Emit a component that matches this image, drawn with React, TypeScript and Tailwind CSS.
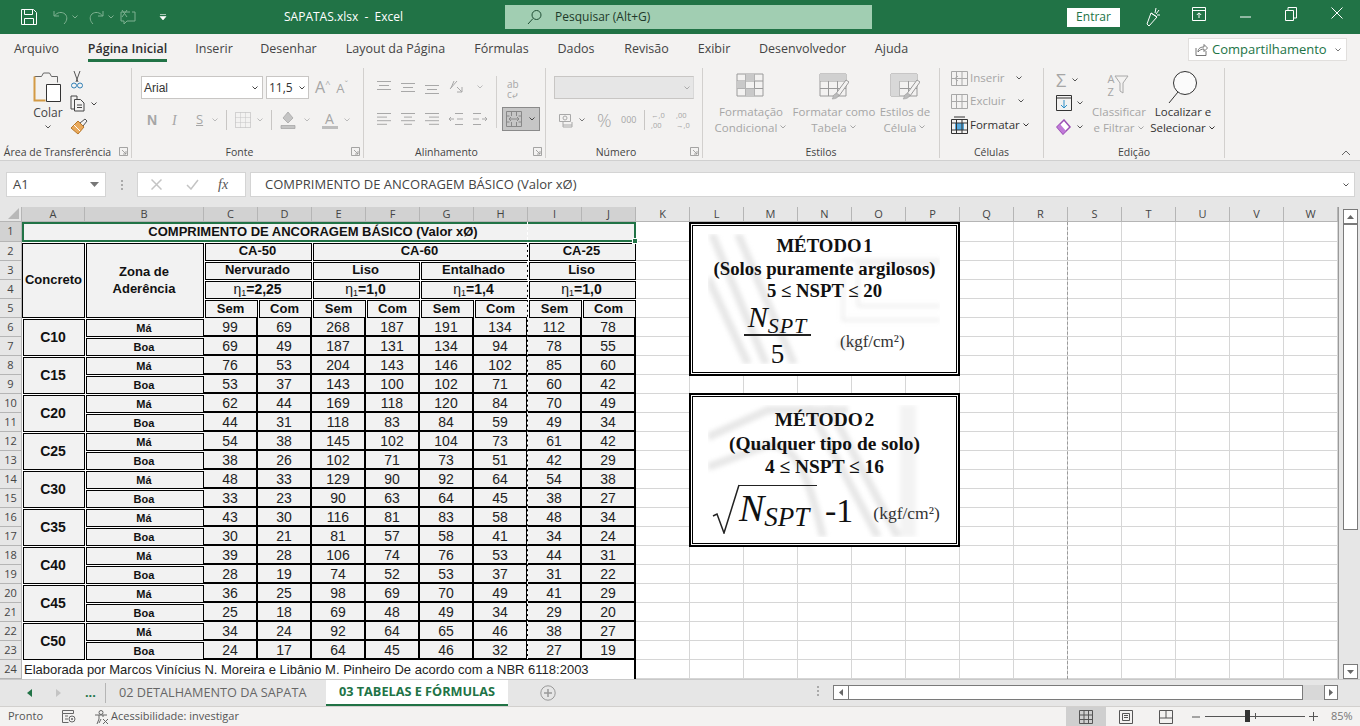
import React from "react";

const G = "#a8a8a8";

function Ic({ w, h, children, className }: { w: number; h: number; children: React.ReactNode; className?: string }) {
  return (
    <svg width={w} height={h} viewBox={`0 0 ${w} ${h}`} fill="none" className={"shrink-0 " + (className ?? "")}>
      {children}
    </svg>
  );
}
function Chev({ c = "#777" }: { c?: string }) {
  return (
    <Ic w={8} h={6}>
      <path d="M1.5 1.5 4 4l2.5-2.5" stroke={c} strokeWidth="1" />
    </Ic>
  );
}
function Launcher() {
  return (
    <Ic w={9} h={9} className="absolute right-[3px] bottom-[2px]">
      <path d="M.5 .5h8v8h-8zM3 3l4 4M7 4v3H4" stroke="#8f8f8f" strokeWidth=".8" />
    </Ic>
  );
}
function AlignIcon({ lines, c = G }: { lines: [number, number][]; c?: string }) {
  return (
    <Ic w={14} h={15}>
      {lines.map(([x, y], i) => (
        <path key={i} d={`M${x - 1} ${y + 0.5}H${15 - x}`} stroke={c} />
      ))}
    </Ic>
  );
}
function TextLines({ kind }: { kind: "l" | "c" | "r" }) {
  const rows = [0, 1, 2, 3];
  return (
    <Ic w={14} h={12}>
      {rows.map((i) => {
        const short = i % 2 === 1;
        const x1 = kind === "l" ? 0 : kind === "c" ? (short ? 3 : 0) : short ? 4 : 0;
        const x2 = kind === "l" ? (short ? 10 : 14) : kind === "c" ? (short ? 11 : 14) : 14;
        return <path key={i} d={`M${x1} ${i * 3.6 + 0.5}H${x2}`} stroke={G} />;
      })}
    </Ic>
  );
}

function TitleBar() {
  return (
    <div className="h-[34px] shrink-0 bg-[#217346] flex items-center text-white">
      <div className="w-[505px] flex items-center shrink-0">
        <Ic w={18} h={18} className="ml-[20px]">
          <path d="M1.5 1.5h12l3 3v12h-15zM4.5 1.5v5h8v-5M4.5 16.5v-6h9v6" stroke="#fff" strokeWidth="1" />
        </Ic>
        <Ic w={17} h={16} className="ml-[14px]">
          <path d="M2 2v5h5M2.5 7C5 3 10 2.5 13 5c3 3 2 7-1 10" stroke="#7fb191" strokeWidth="1" />
        </Ic>
        <span className="ml-[2px]"><Chev c="#7fb191" /></span>
        <Ic w={17} h={16} className="ml-[9px]">
          <path d="M15 2v5h-5M14.5 7C12 3 7 2.5 4 5c-3 3-2 7 1 10" stroke="#7fb191" strokeWidth="1" />
        </Ic>
        <span className="ml-[2px]"><Chev c="#7fb191" /></span>
        <Ic w={16} h={16} className="ml-[5px]">
          <path d="M1 3h9M12 3h3v9H7l-3 3v-3H1V3M2 1l5 7M7 1 2 8" stroke="#7fb191" strokeWidth="1" />
        </Ic>
        <Ic w={8} h={8} className="ml-[23px]">
          <path d="M1 1.5h6M1 3.5h6L4 7z" fill="#fff" stroke="#fff" strokeWidth=".6" />
        </Ic>
        <span className="ml-[117px] text-[12px] whitespace-nowrap">SAPATAS.xlsx&nbsp; - &nbsp;Excel</span>
      </div>
      <div className="w-[367px] h-[24px] bg-[#a1ceb2] flex items-center text-[#1e3a2a] shrink-0">
        <Ic w={16} h={16} className="ml-[22px]">
          <circle cx="9.5" cy="6" r="4.5" stroke="#1f4d33" />
          <path d="M6 9.5 1 15" stroke="#1f4d33" />
        </Ic>
        <span className="ml-[12px] text-[12px]">Pesquisar (Alt+G)</span>
      </div>
      <div className="ml-[195px] w-[53px] h-[19px] bg-white text-[#217346] text-[12px] flex items-center justify-center shrink-0">
        Entrar
      </div>
      <div className="ml-[10px] flex">
        <div className="w-[46px] flex justify-center">
          <Ic w={16} h={20}>
            <path d="M6 6 2 17l2 2 8-9zM6 6l6 4M11 1l-1 5M14 3l-3 4M15 8l-3 0" stroke="#fff" strokeWidth="1" />
          </Ic>
        </div>
        <div className="w-[46px] flex justify-center">
          <Ic w={14} h={14}>
            <path d="M.5 .5h13v13H.5zM.5 3.5h13M7 11V6M4.8 8 7 5.8 9.2 8" stroke="#fff" />
          </Ic>
        </div>
        <div className="w-[46px] flex justify-center items-center">
          <Ic w={11} h={2}><path d="M0 1h11" stroke="#fff" /></Ic>
        </div>
        <div className="w-[46px] flex justify-center">
          <Ic w={12} h={14}>
            <path d="M.5 3.5h8v10h-8zM3 3V.5h8.5V11H9" stroke="#fff" />
          </Ic>
        </div>
        <div className="w-[46px] flex justify-center">
          <Ic w={12} h={12}><path d="M.5 .5l11 11M11.5 .5l-11 11" stroke="#fff" /></Ic>
        </div>
      </div>
    </div>
  );
}

const tabs: [string, string][] = [
  ["Arquivo", "w-[45px]"],
  ["Página Inicial", "w-[79px]"],
  ["Inserir", "w-[36px]"],
  ["Desenhar", "w-[55px]"],
  ["Layout da Página", "w-[101px]"],
  ["Fórmulas", "w-[53px]"],
  ["Dados", "w-[38px]"],
  ["Revisão", "w-[45px]"],
  ["Exibir", "w-[32px]"],
  ["Desenvolvedor", "w-[87px]"],
  ["Ajuda", "w-[33px]"],
];

function TabsRow() {
  return (
    <div className="h-[28px] shrink-0 bg-[#f3f2f1] flex items-start pl-[14px] gap-[29px] text-[12.5px] text-[#444]">
      {tabs.map(([t, w]) => (
        <div
          key={t}
          className={
            w +
            " h-[28px] pt-[6px] flex justify-center whitespace-nowrap " +
            (t === "Página Inicial" ? "font-semibold text-[#2e2e2e] border-b-[3px] border-[#217346] h-[26px]" : "")
          }
        >
          {t}
        </div>
      ))}
      <div className="ml-auto mr-[13px] mt-[4px] w-[159px] h-[23px] bg-white border border-[#e1dfdd] flex items-center text-[#217346] text-[13px] font-medium">
        <Ic w={13} h={13} className="ml-[6px] mr-[4px]">
          <path d="M1 5v7.5h10V8M3 9c0-4 3-5 6-5V1.5L12.5 5 9 8.5V6C6.5 6 4.5 7 3 9z" stroke="#666" strokeWidth=".9" />
        </Ic>
        <span className="whitespace-nowrap">Compartilhamento</span>
        <span className="ml-auto mr-[4px]"><Chev /></span>
      </div>
    </div>
  );
}

function Group({ w, label, launcher, shift, children }: { w: string; label: string; launcher?: boolean; shift?: boolean; children: React.ReactNode }) {
  return (
    <div className={w + " relative shrink-0 flex flex-col border-r border-[#d2d0ce]"}>
      <div className="flex-1 min-h-0">{children}</div>
      <div className={"h-[12px] text-[10.5px] text-[#444] text-center whitespace-nowrap leading-[12px] " + (shift ? "pr-[16px]" : "")}>{label}</div>
      {launcher && <Launcher />}
    </div>
  );
}

function StyleIcon({ variant }: { variant: number }) {
  return (
    <Ic w={30} h={30}>
      <path d="M1 3h26v22H1zM1 10h26M1 17.5h26M9.5 3v22M18.5 3v22" stroke="#9a9a9a" strokeWidth="1" />
      {variant === 0 && <path d="M9.5 3h9v7h-9zM1 10h8.5v7.5H1zM9.5 17.5h9V25h-9z" fill="#c9c9c9" />}
      {variant === 1 && <path d="M1 3h26v7H1z" fill="#d0d0d0" />}
      {variant === 2 && <path d="M1 3h26v7H1zM1 10h8.5v15H1z" fill="#d8d8d8" />}
      {variant > 0 && (
        <>
          <path d="M16 24 27 9l3 2-10 14z" fill="#f3f2f1" stroke="#9a9a9a" />
          <path d="M14 25c2-3 5-3 6-1-1 3-4 4-7 4 1-1 1-2 1-3z" fill="#bbb" stroke="#999" strokeWidth=".5" />
        </>
      )}
    </Ic>
  );
}

function StyleBtn({ icon, l1, l2, w }: { icon: number; l1: string; l2: string; w: string }) {
  return (
    <div className={w + " flex flex-col items-center text-[11.5px] leading-[15.5px] text-[#a6a6a6] whitespace-nowrap"}>
      <div className="h-[33px] mt-[3px]"><StyleIcon variant={icon} /></div>
      <div>{l1}</div>
      <div className="flex items-center gap-[2px]">{l2}<Chev c="#a6a6a6" /></div>
    </div>
  );
}

function Ribbon() {
  return (
    <div className="h-[98px] shrink-0 bg-[#f3f2f1] flex pt-[6px] pb-[2px]">
      <Group w="w-[132px]" label="Área de Transferência" launcher shift>
        <div className="flex pl-[26px] text-[12px] text-[#444]">
          <div className="w-[44px] flex flex-col items-center">
            <Ic w={30} h={33} className="mt-[3px]">
              <path d="M1.5 5.5h7l2-3.5h6l2 3.5h6v6" stroke="#666" fill="none" />
              <path d="M1.5 5.5v24h11" stroke="#d39a45" strokeWidth="2" />
              <path d="M13.5 13.5h14v17h-14z" fill="#fff" stroke="#333" />
            </Ic>
            <div className="mt-[1px] leading-[16px]">Colar</div>
            <div className="mt-[3px]"><Chev c="#555" /></div>
          </div>
          <div className="flex flex-col pt-[3px]">
            <Ic w={14} h={19}>
              <path d="M4 0 8 11M10 0 6 11" stroke="#555" />
              <circle cx="4" cy="14.5" r="2.5" stroke="#2f7fb5" />
              <circle cx="10" cy="14.5" r="2.5" stroke="#2f7fb5" />
            </Ic>
            <div className="flex items-center mt-[5px] gap-[4px]">
              <Ic w={16} h={17}>
                <path d="M1 1h6v3M1 1v13h3M4.5 4.5h6l3.5 3.5v8h-9.5z" stroke="#444" />
                <path d="M7 10h5M7 12.5h5" stroke="#444" />
              </Ic>
              <Chev c="#444" />
            </div>
            <Ic w={18} h={18} className="mt-[6px]">
              <path d="M1 10 8 3l6 6-6 7z" fill="#e9a95b" stroke="#b8772a" />
              <path d="M10 5l5-4 2 2-4 5" stroke="#555" />
              <path d="M4 7l6 6" stroke="#fff" />
            </Ic>
          </div>
        </div>
      </Group>

      <Group w="w-[232px]" label="Fonte" launcher shift>
        <div className="flex items-center pl-[9px] pt-[8px] text-[12px] text-[#333]">
          <div className="w-[122px] h-[23px] bg-white border border-[#c8c6c4] flex items-center pl-[2px] font-['Liberation_Sans']">
            Arial<span className="ml-auto mr-[3px]"><Chev c="#444" /></span>
          </div>
          <div className="ml-[3px] w-[43px] h-[23px] bg-white border border-[#c8c6c4] flex items-center pl-[2px]">
            11,5<span className="ml-auto mr-[2px]"><Chev c="#444" /></span>
          </div>
          <div className="ml-[6px] text-[#a6a6a6] text-[16px] leading-none">A<span className="text-[9px] align-super">^</span></div>
          <div className="ml-[6px] text-[#a6a6a6] text-[13px] leading-none">A<span className="text-[9px] align-super">ˇ</span></div>
        </div>
        <div className="flex items-center pl-[15px] mt-[9px] h-[24px] text-[#a6a6a6]">
          <span className="font-['Liberation_Sans'] font-bold text-[14px] w-[25px]">N</span>
          <span className="font-['Liberation_Serif'] italic text-[14px] w-[24px]">I</span>
          <span className="text-[13px] underline w-[15px]">S</span>
          <Chev c="#bbb" />
          <div className="w-px h-[20px] bg-[#c8c6c4] ml-[7px] mr-[8px]" />
          <Ic w={16} h={16}>
            <path d="M.5 .5h15v15H.5z" stroke="#b0b0b0" strokeDasharray="1 1" />
            <path d="M5.5 .5v15M10.5 .5v15M.5 5.5h15M.5 10.5h15" stroke="#c4c4c4" strokeDasharray="1 1" />
          </Ic>
          <span className="ml-[5px]"><Chev c="#bbb" /></span>
          <div className="w-px h-[20px] bg-[#c8c6c4] ml-[7px] mr-[8px]" />
          <Ic w={16} h={18}>
            <path d="M8 1l5 6-5 5-5-5zM1 14.5h14v3H1z" fill="#c4c4c4" stroke="#a0a0a0" strokeWidth=".7" />
          </Ic>
          <span className="ml-[7px]"><Chev c="#bbb" /></span>
          <div className="ml-[10px] flex flex-col items-center w-[17px]">
            <span className="text-[14px] leading-[14px]">A</span>
            <div className="w-[16px] h-[3px] bg-[#bdbdbd]" />
          </div>
          <span className="ml-[5px]"><Chev c="#bbb" /></span>
        </div>
      </Group>

      <Group w="w-[182px]" label="Alinhamento" launcher shift>
        <div className="flex pl-[13px] pt-[11px]">
          <div className="w-[119px]">
            <div className="flex items-center gap-[10px] h-[16px]">
              <AlignIcon lines={[[1, 1], [3, 5], [1, 9]]} />
              <AlignIcon lines={[[1, 3], [3, 7], [1, 11]]} />
              <AlignIcon lines={[[1, 5], [3, 9], [1, 13]]} />
              <Ic w={17} h={16}>
                <path d="M1 10 8 2M5 2l-3 7M8 8l5 5M13 8v5H8" stroke={G} />
              </Ic>
              <Chev c="#bbb" />
            </div>
            <div className="flex items-center gap-[10px] mt-[17px] h-[14px]">
              <TextLines kind="l" />
              <TextLines kind="c" />
              <TextLines kind="r" />
              <Ic w={14} h={12}><path d="M6 .5h8M6 11.5h8M8 6h6M0 6h5M2 4 0 6l2 2" stroke={G} /></Ic>
              <Ic w={14} h={12}><path d="M0 .5h8M0 11.5h8M0 6h6M9 6h5M12 4l2 2-2 2" stroke={G} /></Ic>
            </div>
          </div>
          <div className="w-px h-[52px] bg-[#d2d0ce] -mt-[3px]" />
          <div className="flex flex-col ml-[5px]">
            <div className="text-[10px] leading-[10px] text-[#a6a6a6] ml-[5px] h-[28px]">ab<br />c⤶</div>
            <div className="w-[38px] h-[24px] bg-[#c6c6c6] border border-[#8a8a8a] flex items-center justify-center gap-[6px]">
              <Ic w={16} h={16}>
                <path d="M.5 .5h15v15H.5zM.5 5h3M12.5 5h3M.5 11h3M12.5 11h3M5.5 .5V5M10.5 .5V5M5.5 11v4.5M10.5 11v4.5" stroke="#888" />
                <path d="M3 8h10M5 6 3 8l2 2M11 6l2 2-2 2" stroke="#888" />
              </Ic>
              <Chev c="#444" />
            </div>
          </div>
        </div>
      </Group>

      <Group w="w-[157px]" label="Número" launcher shift>
        <div className="pl-[8px] pt-[8px]">
          <div className="w-[140px] h-[23px] bg-[#e6e6e6] border border-[#c8c6c4] flex items-center justify-end pr-[2px] border-r-[#d8d8d8]">
            <Chev c="#aaa" />
          </div>
          <div className="flex items-center mt-[9px] ml-[5px] h-[24px] text-[#a6a6a6]">
            <Ic w={15} h={15}>
              <path d="M.5 1.5h11v7H.5zM4 12h9M4 9v5h9V9" stroke={G} />
              <circle cx="6" cy="5" r="2" stroke={G} />
            </Ic>
            <span className="ml-[4px]"><Chev c="#777" /></span>
            <span className="ml-[11px] text-[18px] leading-none font-light w-[24px]">%</span>
            <span className="text-[9px] w-[23px]">000</span>
            <div className="w-px h-[20px] bg-[#c8c6c4]" />
            <span className="ml-[6px] text-[7.5px] leading-[10px] w-[25px] whitespace-nowrap">←,0<br />,00</span>
            <span className="text-[7.5px] leading-[10px] whitespace-nowrap">,00<br />→,0</span>
          </div>
        </div>
      </Group>

      <Group w="w-[237px]" label="Estilos">
        <div className="flex pl-[7px]">
          <StyleBtn icon={0} l1="Formatação" l2="Condicional" w="w-[82px]" />
          <StyleBtn icon={1} l1="Formatar como" l2="Tabela" w="w-[84px]" />
          <StyleBtn icon={2} l1="Estilos de" l2="Célula" w="w-[58px]" />
        </div>
      </Group>

      <Group w="w-[104px]" label="Células">
        <div className="pl-[11px] pt-0 text-[11.5px] leading-[16px] text-[#a6a6a6]">
          <div className="flex items-center h-[20px]">
            <Ic w={17} h={15}><path d="M.5 .5h16v14H.5zM5.5 .5v14M11 .5v14M.5 7.5h16M7 5 4 7.5 7 10" stroke={G} /></Ic>
            <span className="ml-[2px] w-[45px]">Inserir</span><Chev c="#555" />
          </div>
          <div className="flex items-center h-[20px] mt-[3px]">
            <Ic w={17} h={15}><path d="M.5 .5h16v14H.5zM5.5 .5v14M11 .5v14M.5 7.5h16" stroke={G} /></Ic>
            <span className="ml-[2px] w-[47px]">Excluir</span><Chev c="#555" />
          </div>
          <div className="flex items-center h-[20px] mt-[4px] text-[#333]">
            <Ic w={17} h={18}>
              <path d="M.5 3.5h16v14H.5z" stroke="#333" />
              <path d="M4 7h9v7H4z" fill="#55a9de" />
              <path d="M.5 7h16M.5 14h16M5.5 3.5v14M11 3.5v14M3 1h11" stroke="#333" />
            </Ic>
            <span className="ml-[2px] mr-[2px]">Formatar</span><Chev c="#333" />
          </div>
        </div>
      </Group>

      <Group w="w-[181px]" label="Edição">
        <div className="flex text-[11.5px] leading-[16px]">
          <div className="ml-[12px] w-[32px] pt-[3px]">
            <div className="flex items-center gap-[5px] h-[18px] text-[#a6a6a6] text-[18px]">Σ<Chev c="#555" /></div>
            <div className="flex items-center gap-[4px] h-[20px] mt-[4px]">
              <Ic w={16} h={16}>
                <path d="M.5 .5h15v15H.5zM.5 3h15" stroke="#333" />
                <path d="M8 5v8M5 10l3 3 3-3" stroke="#2f8fc8" />
              </Ic>
              <Chev c="#555" />
            </div>
            <div className="flex items-center gap-[4px] h-[18px] mt-[5px]">
              <Ic w={16} h={16}><path d="M1 8 8 1l6 7-7 7z" fill="#fff" stroke="#9b4fb5" strokeWidth="1.5" /><path d="M1 8l3-3 6 7-3 3z" fill="#c07ad8" /></Ic>
              <Chev c="#555" />
            </div>
          </div>
          <div className="w-[62px] flex flex-col items-center text-[#a6a6a6] whitespace-nowrap">
            <div className="h-[33px] mt-[3px] flex items-start">
              <div className="text-[11px] leading-[13px] text-[#a6a6a6] pt-[1px]">A<br />Z</div>
              <Ic w={16} h={20} className="mt-[4px]"><path d="M1 1h13L9 8v10L6 16V8z" stroke={G} /></Ic>
            </div>
            <div>Classificar</div>
            <div className="flex items-center gap-[2px]">e Filtrar<Chev c="#a6a6a6" /></div>
          </div>
          <div className="w-[62px] ml-[2px] flex flex-col items-center text-[#333] whitespace-nowrap">
            <Ic w={32} h={34} className="mt-[2px]">
              <circle cx="18" cy="13" r="11.5" stroke="#333" fill="#fbfbfb" />
              <path d="M11 22 2 33" stroke="#333" />
            </Ic>
            <div>Localizar e</div>
            <div className="flex items-center gap-[2px]">Selecionar<Chev c="#333" /></div>
          </div>
        </div>
      </Group>
      <div className="flex-1 flex items-end justify-end pr-[9px] pb-[2px]">
        <Ic w={10} h={7}><path d="M1 6l4-4 4 4" stroke="#666" /></Ic>
      </div>
    </div>
  );
}

function FormulaBar() {
  return (
    <div className="h-[47px] shrink-0 bg-[#e6e6e6] border-t border-[#d0d0d0] flex items-start pt-[11px] text-[13px] text-[#444]">
      <div className="ml-[6px] w-[100px] h-[25px] bg-white border border-[#d4d4d4] flex items-center pl-[6px]">
        A1
        <Ic w={9} h={5} className="ml-auto mr-[6px]"><path d="M0 0h9L4.5 5z" fill="#777" /></Ic>
      </div>
      <div className="w-[31px] h-[25px] flex flex-col items-center justify-center gap-[2px]">
        <div className="w-[2px] h-[2px] bg-[#aaa]" />
        <div className="w-[2px] h-[2px] bg-[#aaa]" />
        <div className="w-[2px] h-[2px] bg-[#aaa]" />
      </div>
      <div className="w-[109px] h-[25px] bg-white border border-[#d4d4d4] flex items-center">
        <Ic w={11} h={11} className="ml-[13px]"><path d="M.5 .5l10 10M10.5 .5l-10 10" stroke="#c4c4c4" strokeWidth="1.5" /></Ic>
        <Ic w={13} h={11} className="ml-[24px]"><path d="M1 6l4 4 7-9" stroke="#c4c4c4" strokeWidth="1.5" /></Ic>
        <span className="ml-[19px] font-['Liberation_Serif'] italic text-[14px] text-[#555]">fx</span>
      </div>
      <div className="ml-[4px] w-[1105px] h-[25px] bg-white border border-[#d4d4d4] flex items-center pl-[14px]">
        COMPRIMENTO DE ANCORAGEM BÁSICO (Valor xØ)
        <span className="ml-auto mr-[4px]"><Chev c="#555" /></span>
      </div>
    </div>
  );
}

const letters = ["A", "B", "C", "D", "E", "F", "G", "H", "I", "J", "K", "L", "M", "N", "O", "P", "Q", "R", "S", "T", "U", "V", "W"];
const concretes: [string, number[], number[]][] = [
  ["C10", [99, 69, 268, 187, 191, 134, 112, 78], [69, 49, 187, 131, 134, 94, 78, 55]],
  ["C15", [76, 53, 204, 143, 146, 102, 85, 60], [53, 37, 143, 100, 102, 71, 60, 42]],
  ["C20", [62, 44, 169, 118, 120, 84, 70, 49], [44, 31, 118, 83, 84, 59, 49, 34]],
  ["C25", [54, 38, 145, 102, 104, 73, 61, 42], [38, 26, 102, 71, 73, 51, 42, 29]],
  ["C30", [48, 33, 129, 90, 92, 64, 54, 38], [33, 23, 90, 63, 64, 45, 38, 27]],
  ["C35", [43, 30, 116, 81, 83, 58, 48, 34], [30, 21, 81, 57, 58, 41, 34, 24]],
  ["C40", [39, 28, 106, 74, 76, 53, 44, 31], [28, 19, 74, 52, 53, 37, 31, 22]],
  ["C45", [36, 25, 98, 69, 70, 49, 41, 29], [25, 18, 69, 48, 49, 34, 29, 20]],
  ["C50", [34, 24, 92, 64, 65, 46, 38, 27], [24, 17, 64, 45, 46, 32, 27, 19]],
];

function RowLabel({ n }: { n: number }) {
  return (
    <div
      className={
        "border-b border-r border-[#b5b5b5] flex items-center justify-center text-[11px] text-[#444] font-['Open_Sans'] " +
        (n === 1 ? "bg-[#d2d2d2]" : "bg-[#e6e6e6]")
      }
    >
      {n}
    </div>
  );
}
function Empties() {
  return (
    <>
      {Array.from({ length: 13 }, (_, i) => (
        <div key={i} className="border-b border-r border-[#d6d6d6] bg-white" />
      ))}
    </>
  );
}
function Dbl({ className, children }: { className: string; children: React.ReactNode }) {
  return (
    <div className={className + " ml-px mt-px border border-black bg-[#f2f2f2] flex items-center justify-center font-bold text-center text-[#111] whitespace-nowrap"}>
      {children}
    </div>
  );
}
const eta = (v: string) => (
  <span className="leading-none text-[14px]">
    <span className="font-normal">η</span>
    <span className="text-[9px] align-[-2px] font-normal">1</span>={v}
  </span>
);

function NumCell({ v }: { v: number }) {
  return <div className="border-r-2 border-b-2 border-black bg-[#f2f2f2] flex items-center justify-center pt-[2px] text-[14px] text-[#222]">{v}</div>;
}

function Sheet() {
  const rows: React.ReactNode[] = [];
  concretes.forEach(([name, ma, boa], i) => {
    const r = 6 + i * 2;
    rows.push(
      <React.Fragment key={name}>
        <RowLabel n={r} />
        <Dbl className="row-span-2 pr-[2px] text-[14px]">{name}</Dbl>
        <Dbl className="pr-[2px] text-[11px]">Má</Dbl>
        {ma.map((v, j) => <NumCell key={j} v={v} />)}
        <Empties />
        <RowLabel n={r + 1} />
        <Dbl className="pr-[2px] text-[11px]">Boa</Dbl>
        {boa.map((v, j) => <NumCell key={j} v={v} />)}
        <Empties />
      </React.Fragment>
    );
  });

  return (
    <div className="relative overflow-hidden w-[1338px] h-[472px] bg-white">
      <div className="grid grid-cols-[22px_63px_119px_repeat(21,54px)] grid-rows-[15px_20px_repeat(23,19px)] font-['Liberation_Sans'] text-[13px]">
        <div className="bg-[#e6e6e6] border-r border-b border-[#b5b5b5] flex items-end justify-end p-[2px]">
          <Ic w={11} h={11}><path d="M11 0v11H0z" fill="#b8b8b8" /></Ic>
        </div>
        {letters.map((l, i) => (
          <div
            key={l}
            className={
              "border-r border-b border-[#b5b5b5] flex items-center justify-center text-[11px] text-[#444] font-['Open_Sans'] " +
              (i < 10 ? "bg-[#d2d2d2]" : "bg-[#e6e6e6]")
            }
          >
            {l}
          </div>
        ))}

        <RowLabel n={1} />
        <div className="col-span-10 relative border-2 border-[#217346] bg-[#f2f2f2] flex items-center justify-center pr-[32px] font-bold text-[#111] text-[13px] whitespace-nowrap">
          COMPRIMENTO DE ANCORAGEM BÁSICO (Valor xØ)
          <div className="absolute -right-[4px] -bottom-[4px] w-[6px] h-[6px] bg-[#217346] border border-white" />
        </div>
        <Empties />

        <RowLabel n={2} />
        <Dbl className="row-span-4 !ml-0 pb-[1px] text-[13px]">Concreto</Dbl>
        <Dbl className="row-span-4 pr-[2px] pb-[1px] text-[13px] leading-[17px]"><span>Zona de<br />Aderência</span></Dbl>
        <Dbl className="col-span-2 pr-[2px] pb-[2px]">CA-50</Dbl>
        <Dbl className="col-span-4 pr-[2px] pb-[2px]">CA-60</Dbl>
        <Dbl className="col-span-2 pr-[2px] pb-[2px]">CA-25</Dbl>
        <Empties />

        <RowLabel n={3} />
        <Dbl className="col-span-2 pr-[2px] pb-[2px]">Nervurado</Dbl>
        <Dbl className="col-span-2 pr-[2px] pb-[2px]">Liso</Dbl>
        <Dbl className="col-span-2 pr-[2px] pb-[2px]">Entalhado</Dbl>
        <Dbl className="col-span-2 pr-[2px] pb-[2px]">Liso</Dbl>
        <Empties />

        <RowLabel n={4} />
        <Dbl className="col-span-2 pr-[2px]">{eta("2,25")}</Dbl>
        <Dbl className="col-span-2 pr-[2px]">{eta("1,0")}</Dbl>
        <Dbl className="col-span-2 pr-[2px]">{eta("1,4")}</Dbl>
        <Dbl className="col-span-2 pr-[2px]">{eta("1,0")}</Dbl>
        <Empties />

        <RowLabel n={5} />
        {["Sem", "Com", "Sem", "Com", "Sem", "Com", "Sem", "Com"].map((t, i) => (
          <Dbl key={i} className="pr-[2px] text-[13px]">{t}</Dbl>
        ))}
        <Empties />

        {rows}

        <RowLabel n={24} />
        <div className="col-span-10 border-r-2 border-black flex items-center pl-[2px] text-[13px] text-[#222] whitespace-nowrap overflow-hidden">
          Elaborada por Marcos Vinícius N. Moreira e Libânio M. Pinheiro De acordo com a NBR 6118:2003
        </div>
        <Empties />
      </div>

      <div className="absolute left-[527px] top-[15px] bottom-0 border-l border-dashed border-white" />
      <div className="absolute left-[1067px] top-[15px] bottom-0 border-l border-dashed border-[#9a9a9a]" />

      {/* Método 1 */}
      <div className="absolute left-[689px] top-[15px] w-[271px] h-[154px] border-2 border-black p-px bg-white">
        <div className="h-full border border-black relative font-['Liberation_Serif'] text-[#111]">
          <div className="absolute left-[15px] top-[8px] w-[232px] h-[130px] overflow-hidden">
            <svg className="blur-[2px]" width="232" height="130" viewBox="0 0 232 130" fill="none">
              <path d="M4 0 58 130M30 0 86 130M0 44 40 130" stroke="#e8e8e8" strokeWidth="8" />
              <path d="M135 26h97M150 72V30h82M150 72h82M135 26v60h97" stroke="#eeeeee" strokeWidth="3" />
              <path d="M130 110h20" stroke="#eeeeee" strokeWidth="8" />
            </svg>
          </div>
          <div className="relative flex flex-col items-center pt-[9px] font-bold text-[18.75px] leading-[22.5px]">
            <div className="[word-spacing:-3px]">MÉTODO 1</div>
            <div>(Solos puramente argilosos)</div>
            <div>5 ≤ NSPT ≤ 20</div>
          </div>
          <div className="relative flex items-end pl-[51px] -mt-[1px]">
            <div className="flex flex-col items-center w-[67px]">
              <div className="italic text-[30px] leading-[30px] border-b-2 border-[#222] w-full text-center h-[34px] whitespace-nowrap">
                N<span className="text-[22px] align-[-6px] tracking-[1px]">SPT</span>
              </div>
              <div className="text-[27px] leading-[36px]">5</div>
            </div>
            <div className="ml-[29px] mb-[17px] text-[17px] text-[#333]">(kgf/cm²)</div>
          </div>
        </div>
      </div>

      {/* Método 2 */}
      <div className="absolute left-[689px] top-[186px] w-[271px] h-[154px] border-2 border-black p-px bg-white">
        <div className="h-full border border-black relative font-['Liberation_Serif'] text-[#111]">
          <div className="absolute left-[15px] top-[8px] w-[240px] h-[132px] overflow-hidden">
            <svg className="blur-[2px]" width="240" height="132" viewBox="0 0 240 132" fill="none">
              <path d="M0 32 60 5h80M0 62 60 40c30 0 40 30 55 92M100 0 170 132M120 0 190 132" stroke="#e8e8e8" strokeWidth="8" />
              <path d="M200 0v132" stroke="#f3f3f3" strokeWidth="16" />
            </svg>
          </div>
          <div className="relative flex flex-col items-center pt-[11px] font-bold text-[19.4px] leading-[23.5px]">
            <div className="[word-spacing:-3px]">MÉTODO 2</div>
            <div>(Qualquer tipo de solo)</div>
            <div>4 ≤ NSPT ≤ 16</div>
          </div>
          <div className="relative flex items-end pl-[19px] mt-[5px]">
            <Ic w={30} h={50}>
              <path d="M1 32l4-2 7 19L27 1" stroke="#222" strokeWidth="1.5" />
            </Ic>
            <div className="italic text-[38px] leading-[44px] border-t border-[#222] w-[78px] h-[49px] whitespace-nowrap -ml-[3px] mt-[1px]">
              N<span className="text-[27px] align-[-5px]">SPT</span>
            </div>
            <div className="ml-[8px] mb-[3px] text-[34px] leading-[40px]">-1</div>
            <div className="ml-[20px] mb-[7px] text-[17.5px] text-[#333]">(kgf/cm²)</div>
          </div>
        </div>
      </div>
    </div>
  );
}

function VScroll() {
  return (
    <div className="w-[22px] h-[472px] bg-[#e6e6e6] border-l border-[#9a9a9a] flex flex-col items-center pl-[2px]">
      <div className="mt-[2px] w-[15px] h-[15px] bg-white border border-[#7a7a7a] flex items-center justify-center">
        <Ic w={7} h={4}><path d="M3.5 0 7 4H0z" fill="#666" /></Ic>
      </div>
      <div className="w-[15px] h-[306px] bg-white border border-[#7a7a7a]" />
      <div className="mt-auto w-[15px] h-[15px] bg-white border border-[#7a7a7a] flex items-center justify-center">
        <Ic w={7} h={4}><path d="M3.5 4 7 0H0z" fill="#666" /></Ic>
      </div>
    </div>
  );
}

function SheetTabs() {
  return (
    <div className="h-[27px] shrink-0 bg-[#e6e6e6] border-t border-[#c8c8c8] flex items-start text-[12.7px] text-[#666]">
      <Ic w={5} h={8} className="ml-[27px] mt-[9px]"><path d="M5 0v8L0 4z" fill="#217346" /></Ic>
      <Ic w={5} h={8} className="ml-[24px] mt-[9px]"><path d="M0 0v8l5-4z" fill="#c4c4c4" /></Ic>
      <span className="ml-[24px] mt-[3px] font-bold text-[#217346] w-[13px]">...</span>
      <div className="ml-[7px] mt-[3px] w-px h-[20px] bg-[#b5b5b5]" />
      <span className="ml-[13px] mt-[3px] whitespace-nowrap w-[207px]">02 DETALHAMENTO DA SAPATA</span>
      <div className="w-[182px] h-[26px] bg-white border-b-2 border-[#217346] flex items-center justify-center font-bold text-[#217346] whitespace-nowrap">
        03 TABELAS E FÓRMULAS
      </div>
      <Ic w={16} h={16} className="ml-[32px] mt-[5px]">
        <circle cx="8" cy="8" r="7.2" stroke="#999" />
        <path d="M8 4v8M4 8h8" stroke="#999" strokeWidth="1.5" />
      </Ic>
      <div className="ml-[261px] mt-[6px] flex flex-col gap-[2px]">
        <div className="w-[2px] h-[2px] bg-[#aaa]" />
        <div className="w-[2px] h-[2px] bg-[#aaa]" />
        <div className="w-[2px] h-[2px] bg-[#aaa]" />
      </div>
      <div className="ml-[14px] mt-[5px] w-[505px] h-[15px] flex bg-[#d8d8d8]">
        <div className="w-[16px] bg-white border border-[#7a7a7a] flex items-center justify-center">
          <Ic w={4} h={7}><path d="M4 0v7L0 3.5z" fill="#666" /></Ic>
        </div>
        <div className="w-[454px] bg-white border-y border-r border-[#7a7a7a]" />
        <div className="ml-auto w-[14px] bg-white border border-[#7a7a7a] flex items-center justify-center">
          <Ic w={4} h={7}><path d="M0 0v7l4-3.5z" fill="#666" /></Ic>
        </div>
      </div>
    </div>
  );
}

function StatusBar() {
  return (
    <div className="h-[20px] shrink-0 bg-[#f3f2f1] border-t border-[#d2d0ce] flex items-center text-[11px] text-[#555]">
      <span className="ml-[8px] w-[54px]">Pronto</span>
      <Ic w={14} h={13}>
        <path d="M.5 .5h11v3H.5zM.5 3.5v9h6M3 6h3M3 9h3" stroke="#666" />
        <circle cx="10" cy="9" r="3" stroke="#666" />
        <circle cx="10" cy="9" r="1" fill="#666" />
      </Ic>
      <Ic w={15} h={14} className="ml-[18px]">
        <circle cx="7" cy="2.5" r="2" stroke="#666" />
        <path d="M1 5h12M5 5v4l-2 5M9 5v2M7 9l-2 4M9 9l5 5M14 9l-5 5" stroke="#666" />
      </Ic>
      <span className="ml-[2px]">Acessibilidade: investigar</span>
      <div className="ml-auto flex items-center h-full">
        <div className="w-[40px] h-full bg-[#cfcfcf] flex items-center justify-center">
          <Ic w={14} h={14}><path d="M.5 .5h13v13H.5zM5 .5v13M9.5 .5v13M.5 5h13M.5 9.5h13" stroke="#555" /></Ic>
        </div>
        <div className="w-[40px] flex justify-center">
          <Ic w={14} h={14}><path d="M.5 .5h13v13H.5zM3.5 3.5h7v7h-7zM5 5.5h4M5 7.5h4" stroke="#555" /></Ic>
        </div>
        <div className="w-[40px] flex justify-center">
          <Ic w={14} h={14}><path d="M.5 .5h13v13H.5zM.5 8h13M7 .5V8" stroke="#555" /></Ic>
        </div>
        <Ic w={8} h={2} className="ml-[6px]"><path d="M0 1h8" stroke="#555" /></Ic>
        <div className="ml-[5px] w-[100px] h-[1px] bg-[#555] relative">
          <div className="absolute left-[40px] -top-[6px] w-[5px] h-[12px] bg-[#333]" />
          <div className="absolute left-[50px] -top-[3px] w-px h-[6px] bg-[#555]" />
        </div>
        <Ic w={9} h={9} className="ml-[4px]"><path d="M0 4.5h9M4.5 0v9" stroke="#555" /></Ic>
        <span className="ml-[13px] mr-[3px] w-[26px] text-[11px] text-[#777] whitespace-nowrap">85%</span>
      </div>
    </div>
  );
}

export default function App() {
  return (
    <div className="w-[1360px] h-[726px] overflow-hidden flex flex-col font-['Open_Sans',sans-serif]">
      <TitleBar />
      <TabsRow />
      <Ribbon />
      <FormulaBar />
      <div className="flex shrink-0 h-[472px]">
        <Sheet />
        <VScroll />
      </div>
      <SheetTabs />
      <StatusBar />
    </div>
  );
}
